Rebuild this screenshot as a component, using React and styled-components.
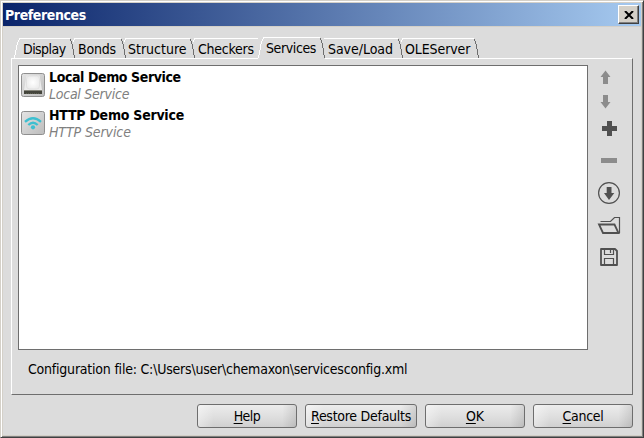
import React from "react";
import styled, { createGlobalStyle } from "styled-components";

const Global = createGlobalStyle`
  * { box-sizing: border-box; }
  body { margin: 0; background: #dcdcdc; overflow: hidden; }
`;

const Window = styled.div`
  width: 644px; height: 438px;
  display: flex; flex-direction: column;
  background: #dcdcdc;
  border: 1px solid; border-color: #d4d0c8 #404040 #404040 #d4d0c8;
  box-shadow: inset 1px 1px #fff, inset -1px -1px #808080, inset 2px 2px #d4d0c8, inset -2px -2px #d4d0c8;
  padding: 2px;
  font: 14px "DejaVu Sans Condensed", "DejaVu Sans", sans-serif;
  font-stretch: condensed;
  color: #000;
`;
const Fit = styled.span`
  display: inline-block; white-space: pre; line-height: 18px;
  letter-spacing: ${(p) => p.$ls || 0}px;
`;
const TitleBar = styled.div`
  flex: none; height: 24px; padding: 2px;
  display: flex; justify-content: space-between;
  background: linear-gradient(90deg, #0a246a, #a6caf0);
  border-bottom: 1px solid #d4d0c8;
  color: #fff; font-weight: bold;
`;
const Title = styled.div`padding-top: 1px;`;
const CloseButton = styled.button`
  width: 21px; height: 19px; padding: 0; border: 1px solid;
  border-color: #fff #404040 #404040 #fff; background: #d4d0c8;
  box-shadow: inset -1px -1px #808080;
  display: grid; place-items: center;
`;
const Tabs = styled.div`
  flex: none; display: flex; height: 22px; margin: 10px 0 -1px 11px; z-index: 1;
`;
const Tab = styled.div`
  position: relative; flex: none; height: 22px; width: ${(p) => p.$w}px; margin-right: -6px;
  padding: ${(p) => (p.$on ? 2 : 3)}px 0 0 ${(p) => p.$pad}px;
`;
const TabShape = styled.svg`
  position: absolute; left: 0; top: 0; z-index: -1; fill: none;
  path { shape-rendering: crispEdges; }
`;
const Panel = styled.div`
  flex: none; width: 622px; height: 337px; margin-left: 8px;
  border: 1px solid; border-color: #fff #6e6e6e #6e6e6e #fff;
  display: grid; grid-template: 285px 1fr / 570px 1fr; padding: 6px 0 0 6px;
`;
const List = styled.div`
  border: 1px solid #6e6e6e; background: #fff; padding: 0 2px;
`;
const Item = styled.div`
  display: flex; align-items: center; height: 38px; gap: 4px;
`;
const Name = styled.div`height: 18px; font-weight: bold; margin-top: 1px;`;
const Kind = styled.div`height: 18px; font-style: italic; color: #808080; margin-top: -1px;`;
const Tools = styled.div`
  display: flex; flex-direction: column; padding-left: 9px;
`;
const ToolIcon = styled.svg`
  flex: none; display: block; width: 24px; height: ${(p) => p.$h || 32}px;
  color: ${(p) => (p.$off ? "#8c8c8c" : "#505050")};
`;
const Config = styled.div`padding: 10px 0 0 10px;`;
const Footer = styled.div`
  display: flex; gap: 8px; margin: 9px 8px 0 auto;
`;
const Button = styled.button`
  width: ${(p) => p.$w || 100}px; height: 24px; padding: 0;
  border: 1px solid #6e6e6e; border-radius: 3px;
  background:
    linear-gradient(90deg, rgba(255,255,255,.4), transparent 16%, transparent 86%, rgba(0,0,0,.1)),
    linear-gradient(180deg, #ececec, #dedede 55%, #d0d0d0);
  font: inherit; color: #000;
  u { text-underline-offset: 2px; text-decoration-thickness: 1px; }
`;

// label, width, left text padding, letter spacing
const tabs = [
  ["Display", 61, 9, -0.55], ["Bonds", 57, 9, -0.2], ["Structure", 75, 8, 0],
  ["Checkers", 75, 9, -0.25], ["Services", 67, 8, -0.4],
  ["Save/Load", 84, 9, -0.05], ["OLEServer", 82, 8, -0.1],
];

function TabEdge({ w, first, on, afterOn }) {
  const t = on ? 0.5 : 1.5;
  return (
    <TabShape width={w} height="22">
      {on && <rect x="0" y="1" width={w} height="21" fill="#dcdcdc" />}
      {first || on
        ? <path d={`M0.5 21L3.5 ${t + 4}L5.5 ${t + 1}`} stroke="#fff" />
        : !afterOn && <path d={`M4 ${t + 3}L5.5 ${t + 1}`} stroke="#fff" />}
      <path d={`M5 ${t}H${w - 5}`} stroke="#fff" />
      <path d={`M${w - 4.5} ${t + 0.5}L${w - 2.5} ${t + 7}L${w - 0.5} 21`} stroke="#6e6e6e" />
    </TabShape>
  );
}

const LocalIcon = () => (
  <svg width="24" height="24">
    <defs>
      <linearGradient id="plate" x2="1" y2="1"><stop stopColor="#e4e4e4" /><stop offset="1" stopColor="#bcbcbc" /></linearGradient>
      <radialGradient id="disk"><stop stopColor="#fff" /><stop offset="1" stopColor="#ededed" /></radialGradient>
    </defs>
    <rect x=".5" y=".5" width="23" height="23" rx="2" fill="url(#plate)" stroke="#8f8f8f" />
    <path d="M5.5 2.5H18.5L21 17H3Z" fill="#ececec" />
    <rect x="5.5" y="3" width="13" height="13" rx="3" fill="url(#disk)" stroke="#dadada" strokeWidth=".6" />
    <path d="M3 17H21V21H3Z" fill="#44453c" />
    <path d="M3 17.5H21" stroke="#87877c" />
    <path d="M5 20.5H19" stroke="#5d5f51" strokeDasharray="1 1" />
  </svg>
);
const HttpIcon = () => (
  <svg width="24" height="24">
    <rect x=".5" y=".5" width="23" height="23" rx="2" fill="url(#plate)" stroke="#8f8f8f" />
    <g fill="none" stroke="#3dbfd0" strokeWidth="2.3">
      <path d="M4 10.8Q12 3.6 20 10.8" /><path d="M7.3 14Q12 9.6 16.7 14" />
    </g>
    <circle cx="12" cy="16.3" r="2.1" fill="#3dbfd0" />
  </svg>
);

export default function App() {
  return (
    <Window>
      <Global />
      <TitleBar>
        <Title><Fit $ls={-0.4}>Preferences</Fit></Title>
        <CloseButton aria-label="Close"><svg width="10" height="8" stroke="#000" strokeWidth="2"><path d="M1 0L9 8M9 0L1 8" /></svg></CloseButton>
      </TitleBar>
      <Tabs>
        {tabs.map(([t, w, pad, ls], i) => (
          <Tab key={t} $w={w} $pad={pad} $on={i === 4}>
            <TabEdge w={w} first={i === 0} on={i === 4} afterOn={i === 5} />
            <Fit $ls={ls}>{t}</Fit>
          </Tab>
        ))}
      </Tabs>
      <Panel>
        <List>
          <Item><LocalIcon /><div><Name><Fit $ls={-0.4}>Local Demo Service</Fit></Name><Kind><Fit $ls={-0.25}>Local Service</Fit></Kind></div></Item>
          <Item><HttpIcon /><div><Name><Fit $ls={-0.25}>HTTP Demo Service</Fit></Name><Kind><Fit $ls={-0.1}>HTTP Service</Fit></Kind></div></Item>
        </List>
        <Tools>
          <ToolIcon $h={24} $off><path fill="currentColor" d="M8.5 5.5L13.5 12H11V19H6V12H3.5Z" /></ToolIcon>
          <ToolIcon $h={24} $off><path fill="currentColor" d="M8.5 19.5L13.5 13H11V6H6V13H3.5Z" /></ToolIcon>
          <ToolIcon><path fill="currentColor" d="M10 8H15V13H20V18H15V23H10V18H5V13H10Z" /></ToolIcon>
          <ToolIcon $off><path fill="currentColor" d="M4 13H20V18H4Z" /></ToolIcon>
          <ToolIcon>
            <circle cx="12" cy="16" r="10.4" fill="none" stroke="currentColor" strokeWidth="1.2" />
            <path fill="currentColor" d="M9.7 10H14.5V16H17.3L12 23L7 16H9.7Z" />
          </ToolIcon>
          <ToolIcon fill="none" stroke="currentColor">
            <path d="M3.5 12.5H13.5L17.5 8.5H22.5V24" strokeWidth="1.2" />
            <path d="M2 15.5H17.5L21.5 24H6Z" strokeWidth="1.8" />
          </ToolIcon>
          <ToolIcon fill="none" stroke="currentColor">
            <path d="M4 8H18L20 10V24H4Z" strokeWidth="1.8" strokeLinejoin="round" />
            <path d="M7.5 8V13.5H16.5V8M13.5 9V12M7.5 24V17.5H16.5V24" strokeWidth="1.2" />
          </ToolIcon>
        </Tools>
        <Config><Fit $ls={-0.215}>Configuration file: C:\Users\user\chemaxon\servicesconfig.xml</Fit></Config>
      </Panel>
      <Footer>
        <Button><Fit $ls={-0.5}><u>H</u>elp</Fit></Button>
        <Button $w={112}><Fit $ls={-0.27}><u>R</u>estore Defaults</Fit></Button>
        <Button><Fit><u>O</u>K</Fit></Button>
        <Button><Fit $ls={-0.3}><u>C</u>ancel</Fit></Button>
      </Footer>
    </Window>
  );
}
